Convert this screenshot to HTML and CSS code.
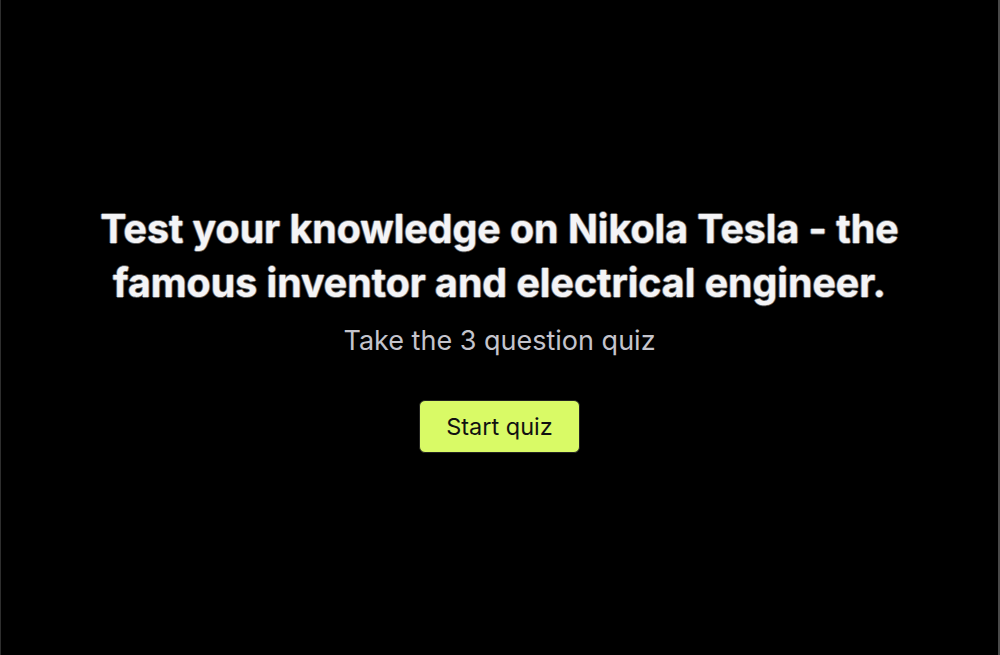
FILE: index.html
```html
<!DOCTYPE html>
<html lang="en">
<head>
<meta charset="utf-8">
<title>Nikola Tesla Quiz</title>
<link rel="stylesheet" href="styles.css">
</head>
<body>
<main class="page">
  <section class="intro">
    <h1 class="title">Test your knowledge on Nikola Tesla - the famous inventor and electrical engineer.</h1>
    <p class="subtitle">Take the 3 question quiz</p>
    <button class="start-btn" type="button">Start quiz</button>
  </section>
</main>
</body>
</html>
```

FILE: styles.css
```css
html, body {
  margin: 0;
  padding: 0;
  height: 100%;
  background: #000;
}
body {
  font-family: Inter, "Noto Sans", sans-serif;
  color: #fff;
}
.page {
  box-sizing: border-box;
  height: 100%;
  border-left: 1px solid #2e2e2e;
  border-right: 2px solid #4a4a4a;
  display: flex;
  align-items: center;
  justify-content: center;
}
.intro {
  display: flex;
  flex-direction: column;
  align-items: center;
  text-align: center;
}
.title {
  margin: 0;
  width: 900px;
  font-size: 39.3px;
  line-height: 54px;
  font-weight: 700;
  color: #f4f4f6;
  text-shadow: 0 0 1px #888, 1px 0 0 #555, -1px 0 0 #555, 0 1px 0 #555, 0 -1px 0 #555;
}
.subtitle {
  margin: 13px 0 0;
  font-size: 27px;
  line-height: 36px;
  color: #c4c4cc;
}
.start-btn {
  margin-top: 41px;
  width: 161px;
  height: 53px;
  border: 1px solid #222;
  border-radius: 6px;
  background: #d9fa66;
  color: #111;
  font-family: Inter, "Noto Sans", sans-serif;
  font-size: 23.5px;
  padding: 0;
}
```
